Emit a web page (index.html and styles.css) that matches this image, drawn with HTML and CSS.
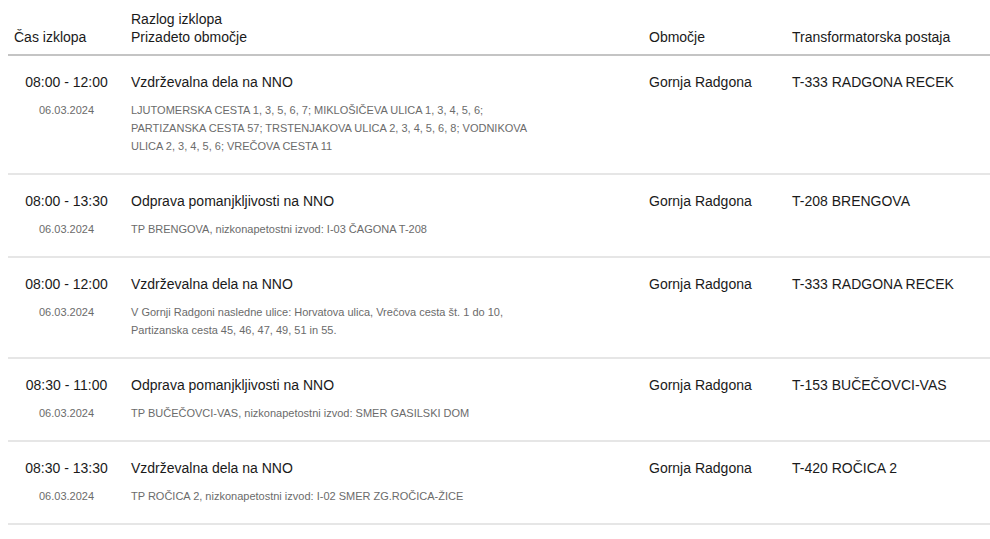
FILE: index.html
```html
<!DOCTYPE html>
<html lang="sl">
<head>
<meta charset="utf-8">
<link rel="stylesheet" href="styles.css">
</head>
<body>
<div class="wrap">
<table class="outages">
  <colgroup>
    <col class="c-time"><col class="c-reason"><col class="c-area"><col class="c-tp">
  </colgroup>
  <thead>
    <tr>
      <th>Čas izklopa</th>
      <th>Razlog izklopa<br>Prizadeto območje</th>
      <th>Območje</th>
      <th>Transformatorska postaja</th>
    </tr>
  </thead>
  <tbody>
    <tr>
      <td class="time"><div class="main">08:00 - 12:00</div><div class="sub">06.03.2024</div></td>
      <td><div class="main">Vzdrževalna dela na NNO</div><div class="sub detail">LJUTOMERSKA CESTA 1, 3, 5, 6, 7; MIKLOŠIČEVA ULICA 1, 3, 4, 5, 6; PARTIZANSKA CESTA 57; TRSTENJAKOVA ULICA 2, 3, 4, 5, 6, 8; VODNIKOVA ULICA 2, 3, 4, 5, 6; VREČOVA CESTA 11</div></td>
      <td><div class="main">Gornja Radgona</div></td>
      <td><div class="main">T-333 RADGONA RECEK</div></td>
    </tr>
    <tr>
      <td class="time"><div class="main">08:00 - 13:30</div><div class="sub">06.03.2024</div></td>
      <td><div class="main">Odprava pomanjkljivosti na NNO</div><div class="sub detail">TP BRENGOVA, nizkonapetostni izvod: I-03 ČAGONA T-208</div></td>
      <td><div class="main">Gornja Radgona</div></td>
      <td><div class="main">T-208 BRENGOVA</div></td>
    </tr>
    <tr>
      <td class="time"><div class="main">08:00 - 12:00</div><div class="sub">06.03.2024</div></td>
      <td><div class="main">Vzdrževalna dela na NNO</div><div class="sub detail">V Gornji Radgoni nasledne ulice: Horvatova ulica, Vrečova cesta št. 1 do 10, Partizanska cesta 45, 46, 47, 49, 51 in 55.</div></td>
      <td><div class="main">Gornja Radgona</div></td>
      <td><div class="main">T-333 RADGONA RECEK</div></td>
    </tr>
    <tr>
      <td class="time"><div class="main">08:30 - 11:00</div><div class="sub">06.03.2024</div></td>
      <td><div class="main">Odprava pomanjkljivosti na NNO</div><div class="sub detail">TP BUČEČOVCI-VAS, nizkonapetostni izvod: SMER GASILSKI DOM</div></td>
      <td><div class="main">Gornja Radgona</div></td>
      <td><div class="main">T-153 BUČEČOVCI-VAS</div></td>
    </tr>
    <tr>
      <td class="time"><div class="main">08:30 - 13:30</div><div class="sub">06.03.2024</div></td>
      <td><div class="main">Vzdrževalna dela na NNO</div><div class="sub detail">TP ROČICA 2, nizkonapetostni izvod: I-02 SMER ZG.ROČICA-ŽICE</div></td>
      <td><div class="main">Gornja Radgona</div></td>
      <td><div class="main">T-420 ROČICA 2</div></td>
    </tr>
  </tbody>
</table>
</div>
</body>
</html>
```

FILE: styles.css
```css
html, body {
  margin: 0;
  padding: 0;
  background: #fff;
}
body {
  font-family: "Liberation Sans", Arial, sans-serif;
  color: #1a1a1a;
}
.wrap {
  padding-left: 8px;
}
.outages {
  width: 982px;
  border-collapse: collapse;
  table-layout: fixed;
}
.c-time { width: 117px; }
.c-reason { width: 518px; }
.c-area { width: 143px; }
.c-tp { width: 204px; }

.outages th {
  font-weight: normal;
  font-size: 14px;
  line-height: 18px;
  text-align: left;
  vertical-align: bottom;
  padding: 10px 6px 8px 6px;
  border-bottom: 2px solid #c4c4c4;
  color: #1a1a1a;
}
.outages td {
  vertical-align: top;
  padding: 16px 6px 18px 6px;
  border-bottom: 2px solid #e6e6e6;
}
.main {
  font-size: 14px;
  line-height: 20px;
  color: #1a1a1a;
}
.sub {
  margin-top: 9px;
  font-size: 11px;
  line-height: 18px;
  color: #6b6b6b;
}
.time {
  text-align: center;
}
.detail {
  max-width: 402px;
}
```
